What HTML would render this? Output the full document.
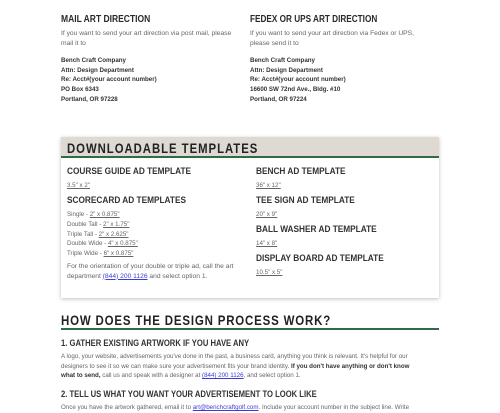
<!DOCTYPE html>
<html><head><style>
*{margin:0;padding:0;box-sizing:border-box}
body{width:500px;height:411px;overflow:hidden;background:#fff;font-family:"Liberation Sans",sans-serif;color:#555;position:relative}
.a{position:absolute;white-space:nowrap;transform-origin:0 0}
h3{font-size:10px;font-weight:bold;color:#2a2a2a}
.p{font-size:6.2px;line-height:9.6px;color:#666}
.p2{font-size:6.7px;line-height:9.6px;color:#666}
.b{font-size:6.2px;line-height:9.7px;font-weight:bold;color:#333}
h4{font-size:9.2px;font-weight:bold;color:#333}
.u{text-decoration:underline;color:#666}
.l{color:#3b3bd6;text-decoration:underline}
.box{position:absolute;left:61px;top:137px;width:378px;height:161px;background:#fff;box-shadow:0 1px 4px rgba(0,0,0,.25)}
.band{position:absolute;left:61px;top:137px;width:378px;height:21px;background:#dedad3;border-bottom:2px solid #2f6b44}
</style></head><body>
<div class="a" style="left:61px;top:14px;transform:scaleX(.85)"><h3>MAIL ART DIRECTION</h3></div>
<div class="a p2" style="left:61px;top:29px">If you want to send your art direction via post mail, please<br>mail it to</div>
<div class="a b" style="left:61px;top:56px">Bench Craft Company<br>Attn: Design Department<br>Re: Acct#(your account number)<br>PO Box 6343<br>Portland, OR 97228</div>
<div class="a" style="left:250px;top:14px;transform:scaleX(.82)"><h3>FEDEX OR UPS ART DIRECTION</h3></div>
<div class="a p2" style="left:250px;top:29px">If you want to send your art direction via Fedex or UPS,<br>please send it to</div>
<div class="a b" style="left:250px;top:56px">Bench Craft Company<br>Attn: Design Department<br>Re: Acct#(your account number)<br>16600 SW 72nd Ave., Bldg. #10<br>Portland, OR 97224</div>

<div class="box"></div>
<div class="band"></div>
<div class="a" style="left:67px;top:140px;font-size:14px;font-weight:bold;letter-spacing:1.2px;color:#222;transform:scaleX(.81)">DOWNLOADABLE TEMPLATES</div>

<div class="a" style="left:67px;top:166px;transform:scaleX(.9)"><h4>COURSE GUIDE AD TEMPLATE</h4></div>
<div class="a p u" style="left:67px;top:181px">3.5" x 2"</div>
<div class="a" style="left:67px;top:195px;transform:scaleX(.9)"><h4>SCORECARD AD TEMPLATES</h4></div>
<div class="a p" style="left:67px;top:210px;line-height:9.8px">Single - <span class="u">2" x 0.875"</span><br>Double Tall - <span class="u">2" x 1.75"</span><br>Triple Tall - <span class="u">2" x 2.625"</span><br>Double Wide - <span class="u">4" x 0.875"</span><br>Triple Wide - <span class="u">6" x 0.875"</span></div>
<div class="a p2" style="left:67px;top:262px">For the orientation of your double or triple ad, call the art<br>department <span class="l">(844) 200 1126</span> and select option 1.</div>

<div class="a" style="left:256px;top:166px;transform:scaleX(.9)"><h4>BENCH AD TEMPLATE</h4></div>
<div class="a p u" style="left:256px;top:181px">36" x 12"</div>
<div class="a" style="left:256px;top:195px;transform:scaleX(.9)"><h4>TEE SIGN AD TEMPLATE</h4></div>
<div class="a p u" style="left:256px;top:210px">20" x 9"</div>
<div class="a" style="left:256px;top:224px;transform:scaleX(.9)"><h4>BALL WASHER AD TEMPLATE</h4></div>
<div class="a p u" style="left:256px;top:239px">14" x 8"</div>
<div class="a" style="left:256px;top:253px;transform:scaleX(.9)"><h4>DISPLAY BOARD AD TEMPLATE</h4></div>
<div class="a p u" style="left:256px;top:268px">10.5" x 5"</div>

<div class="a" style="left:61px;top:312px;font-size:14px;font-weight:bold;letter-spacing:1px;color:#222;transform:scaleX(.82)">HOW DOES THE DESIGN PROCESS WORK?</div>
<div style="position:absolute;left:61px;top:328px;width:378px;height:2px;background:#2f6b44"></div>
<div class="a" style="left:61px;top:338px;font-size:9px;font-weight:bold;color:#333;transform:scaleX(.85)">1. GATHER EXISTING ARTWORK IF YOU HAVE ANY</div>
<div class="a p" style="left:61px;top:352px">A logo, your website, advertisements you've done in the past, a business card, anything you think is relevant. It's helpful for our<br>designers to see it so we can make sure your advertisement fits your brand identity. <b style="color:#333">If you don't have anything or don't know</b><br><b style="color:#333">what to send,</b> call us and speak with a designer at <span class="l">(844) 200 1126</span>, and select option 1.</div>
<div class="a" style="left:61px;top:389px;font-size:9px;font-weight:bold;color:#333;transform:scaleX(.85)">2. TELL US WHAT YOU WANT YOUR ADVERTISEMENT TO LOOK LIKE</div>
<div class="a p" style="left:61px;top:403px">Once you have the artwork gathered, email it to <span class="l">art@benchcraftgolf.com</span>. Include your account number in the subject line. Write</div>
</body></html>
